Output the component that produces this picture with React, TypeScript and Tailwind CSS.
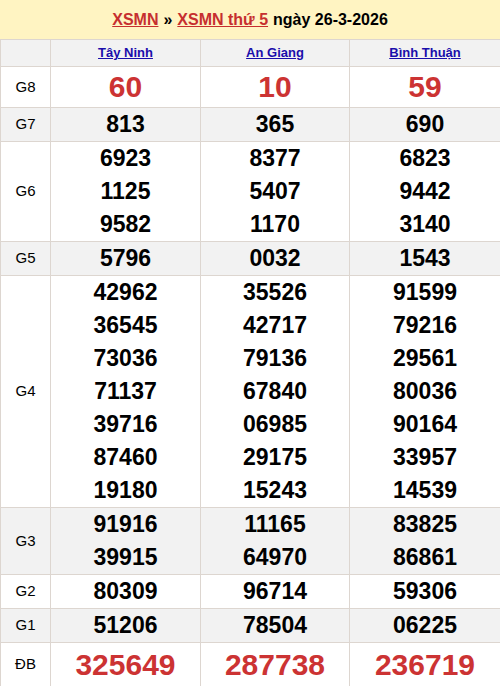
import React from "react";

type Row = { label: string; vals: string[][]; big?: boolean; gray?: boolean };

const rows: Row[] = [
  { label: "G8", vals: [["60"], ["10"], ["59"]], big: true },
  { label: "G7", vals: [["813"], ["365"], ["690"]], gray: true },
  { label: "G6", vals: [["6923", "1125", "9582"], ["8377", "5407", "1170"], ["6823", "9442", "3140"]] },
  { label: "G5", vals: [["5796"], ["0032"], ["1543"]], gray: true },
  {
    label: "G4",
    vals: [
      ["42962", "36545", "73036", "71137", "39716", "87460", "19180"],
      ["35526", "42717", "79136", "67840", "06985", "29175", "15243"],
      ["91599", "79216", "29561", "80036", "90164", "33957", "14539"],
    ],
  },
  { label: "G3", vals: [["91916", "39915"], ["11165", "64970"], ["83825", "86861"]], gray: true },
  { label: "G2", vals: [["80309"], ["96714"], ["59306"]] },
  { label: "G1", vals: [["51206"], ["78504"], ["06225"]], gray: true },
  { label: "ĐB", vals: [["325649"], ["287738"], ["236719"]], big: true },
];

export default function App() {
  return (
    <div className="w-[500px] bg-white" style={{ fontFamily: '"Liberation Sans", Arial, sans-serif' }}>
      <div className="h-[39px] bg-[#fff4c2] flex items-center justify-center text-[16px] font-bold text-black">
        <a href="#" className="text-[#c62f2f] underline">XSMN</a>
        <span className="mx-[5px]">»</span>
        <a href="#" className="text-[#c62f2f] underline">XSMN thứ 5</a>
        <span className="ml-[5px]">ngày 26-3-2026</span>
      </div>
      <table className="w-[500px] table-fixed border-collapse">
        <colgroup>
          <col className="w-[50px]" />
          <col className="w-[150px]" />
          <col className="w-[149px]" />
          <col className="w-[151px]" />
        </colgroup>
        <tbody>
          <tr className="bg-[#f2f2f2] h-[27px]">
            <td className="border border-[#ddd6d0]"></td>
            {["Tây Ninh", "An Giang", "Bình Thuận"].map((p) => (
              <td key={p} className="border border-[#ddd6d0] text-center text-[13px] font-bold p-0">
                <a href="#" className="text-[#1a0dab] underline">{p}</a>
              </td>
            ))}
          </tr>
          {rows.map((r) => (
            <tr key={r.label} className={r.gray ? "bg-[#f2f2f2]" : "bg-white"}>
              <td className="border border-[#ddd6d0] text-center text-[15px] text-black p-0">{r.label}</td>
              {r.vals.map((v, i) => (
                <td key={i} className="border border-[#ddd6d0] text-center p-0 align-middle">
                  {v.map((n) =>
                    r.big ? (
                      <div key={n} className={`font-bold text-[#cc3333] text-[30px] ${r.label === "ĐB" ? "leading-[43px]" : "leading-[40px]"}`}>
                        {n}
                      </div>
                    ) : (
                      <div key={n} className="font-bold text-black text-[23px] leading-[33px]">
                        {n}
                      </div>
                    )
                  )}
                </td>
              ))}
            </tr>
          ))}
        </tbody>
      </table>
    </div>
  );
}
